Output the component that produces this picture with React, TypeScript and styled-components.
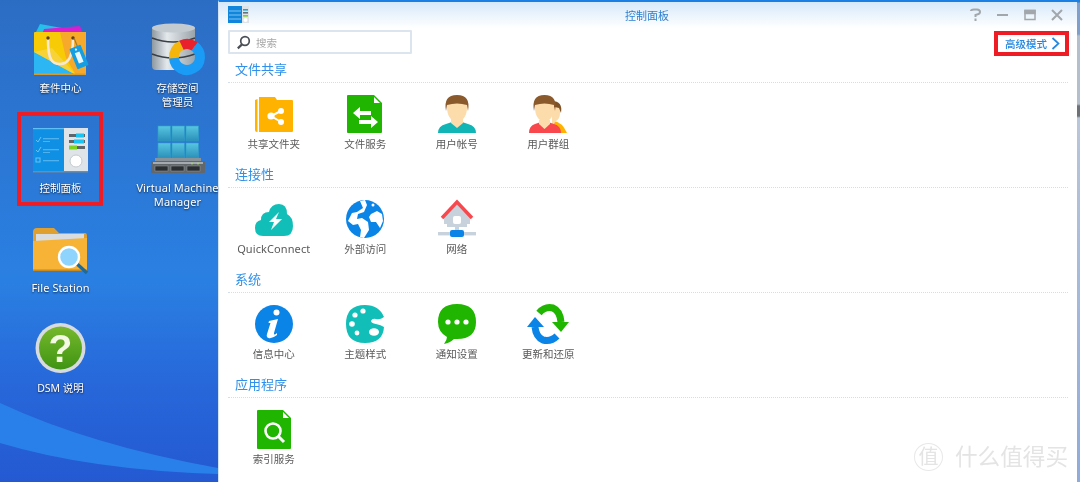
import React from 'react';
import styled, { createGlobalStyle } from 'styled-components';

const Global = createGlobalStyle`
  html, body { margin: 0; padding: 0; background: #fff; }
  body { font-family: "Noto Sans", "Noto Sans CJK SC", sans-serif; }
`;

const Page = styled.div`
  position: relative;
  display: flex;
  width: 1080px;
  height: 482px;
  overflow: hidden;
  background: linear-gradient(180deg, #2c6dc4 0%, #2b78d6 35%, #2a80e2 58%, #2767da 80%, #2459d2 100%);
  filter: blur(0.35px);
`;

const Wave = styled.svg`
  position: absolute;
  left: 0;
  top: 0;
`;

const Desktop = styled.div`
  position: relative;
  display: grid;
  grid-template-columns: 117px 99px;
  grid-auto-rows: 100px;
  width: 218px;
  flex: none;
  padding: 20px 0 0 2px;
  box-sizing: border-box;
`;

const Shortcut = styled.div<{ $marked?: boolean }>`
  position: relative;
  display: flex;
  flex-direction: column;
  align-items: center;
  width: 117px;
  &::after {
    content: '';
    display: ${(p) => (p.$marked ? 'block' : 'none')};
    position: absolute;
    left: 15px;
    top: -8px;
    width: 86px;
    height: 94px;
    box-sizing: border-box;
    border: 4px solid #ee1c25;
  }
`;

const ShortcutLabel = styled.div<{ $latin?: boolean }>`
  margin-top: 1px;
  font-size: ${(p) => (p.$latin ? '11px' : '10.5px')};
  letter-spacing: ${(p) => (p.$latin ? '0.1px' : '0')};
  line-height: 14px;
  color: #fff;
  text-align: center;
  white-space: pre;
  text-shadow: 0 1px 2px rgba(0, 0, 0, 0.7);
`;

const Window = styled.div`
  display: flex;
  flex-direction: column;
  flex: none;
  width: 859px;
  height: 482px;
  box-sizing: border-box;
  background: #fff;
  border-top: 2px solid #1a80e4;
  border-left: 1px solid #d4e2f6;
`;

const TitleBar = styled.div`
  display: flex;
  align-items: center;
  height: 26px;
  flex: none;
  padding: 0 12px 0 9px;
  background: linear-gradient(180deg, #d6e9fa 0%, #ffffff 100%);
`;

const Title = styled.div`
  flex: 1;
  text-align: center;
  font-size: 11px;
  color: #2c7fd0;
  padding-left: 76px;
`;

const Controls = styled.div`
  display: flex;
  gap: 11px;
  align-items: center;
`;

const Toolbar = styled.div`
  display: flex;
  align-items: flex-start;
  justify-content: space-between;
  height: 30px;
  flex: none;
  padding: 2px 8px 0 9px;
`;

const Search = styled.div`
  display: flex;
  align-items: center;
  gap: 5px;
  width: 184px;
  height: 24px;
  box-sizing: border-box;
  padding-left: 6px;
  border: 2px solid #dce4ee;
  border-radius: 1px;
  font-size: 10.5px;
  color: #a8a8a8;
`;

const AdvancedLink = styled.div`
  display: flex;
  align-items: center;
  justify-content: space-between;
  width: 75px;
  height: 25px;
  margin-top: 1px;
  box-sizing: border-box;
  padding: 0 5px 0 7px;
  border: 4px solid #ee1c25;
  font-size: 10.5px;
  color: #2487e0;
  font-weight: 500;
`;

const Section = styled.section`
  height: 105px;
  flex: none;
  padding: 0 9px;
`;

const SectionHead = styled.div`
  height: 20px;
  padding: 0 0 2px 7px;
  font-size: 13px;
  line-height: 19px;
  color: #2e90ea;
  border-bottom: 1px dotted #d3deec;
`;

const Items = styled.div`
  display: grid;
  grid-template-columns: repeat(4, 91.5px);
  padding-top: 9px;
`;

const Item = styled.div`
  display: flex;
  flex-direction: column;
  align-items: center;
`;

const ItemLabel = styled.div<{ $latin?: boolean }>`
  margin-top: 1px;
  font-size: ${(p) => (p.$latin ? '11px' : '10.5px')};
  letter-spacing: ${(p) => (p.$latin ? '0.1px' : '0')};
  line-height: 14px;
  color: #5a5a5a;
`;

const Strip = styled.div`
  flex: 1;
  background: linear-gradient(180deg, #1a80e4 0, #1a80e4 2px, #7f9fce 3px, #7f9fce 34px, #b4bfcd 36px, #b4bfcd 104px, #6d7278 106px, #6d7278 116px, #b9c6da 118px, #8fabdc 100%);
`;

const Watermark = styled.div`
  position: absolute;
  right: 12px;
  bottom: 11px;
  display: flex;
  align-items: center;
  gap: 12px;
  font-size: 22.6px;
  line-height: 28px;
  color: #e4e4e4;
`;

const WatermarkBadge = styled.span`
  display: flex;
  align-items: center;
  justify-content: center;
  width: 29px;
  height: 28px;
  box-sizing: border-box;
  border: 1px solid #e8e8e8;
  border-radius: 50%;
  font-size: 20px;
`;

const Package = () => (
  <svg width="60" height="60" viewBox="31 20 60 60">
    <polygon points="36,32 40,24 62,28 46,32" fill="#24c0ea" />
    <polygon points="43,32 44,29 80,26 82,32" fill="#d61fd0" />
    <rect x="34" y="32" width="52" height="43" rx="1" fill="#f7cb06" />
    <polygon points="60,32 86,32 86,75 76,75 66,58" fill="#f6a92a" />
    <polygon points="34,52 76,75 34,75" fill="#2cb6f4" />
    <polygon points="34,52 52,48 76,75" fill="#f9d95a" opacity="0.6" />
    <rect x="34" y="73.5" width="52" height="1.5" fill="#d99b2a" />
    <path d="M48 39 C48 60 52 64 60 64 C68 64 73 58 73 39" fill="none" stroke="#f6e9cf" strokeWidth="2.6" />
    <circle cx="48" cy="38" r="1.7" fill="#5b3b12" />
    <circle cx="73" cy="38" r="1.7" fill="#5b3b12" />
    <path d="M74 38 L78 48" stroke="#a67a2b" strokeWidth="1.2" />
    <g transform="rotate(-22 79 57)">
      <rect x="73" y="46" width="12" height="22" rx="1" fill="#159fe2" />
      <rect x="76.5" y="52" width="5" height="11" fill="#e8f6ff" />
      <circle cx="79" cy="49" r="1.1" fill="#e8f6ff" />
    </g>
  </svg>
);

const Storage = () => (
  <svg width="60" height="60" viewBox="148 20 60 60">
    <defs>
      <linearGradient id="disk" x1="0" x2="1" y1="0" y2="0">
        <stop offset="0" stopColor="#8d98a0" />
        <stop offset="0.35" stopColor="#e4e9ec" />
        <stop offset="1" stopColor="#9aa3aa" />
      </linearGradient>
    </defs>
    <rect x="152" y="26" width="43" height="44" rx="4" fill="url(#disk)" />
    <ellipse cx="173.5" cy="28" rx="21.5" ry="4.5" fill="#c3cbd1" />
    <path d="M152 38 Q173 46 195 38" fill="none" stroke="#3a4046" strokeWidth="1.6" />
    <path d="M152 54 Q173 62 195 54" fill="none" stroke="#3a4046" strokeWidth="1.6" />
    <path d="M194.5 46.4 A13 13 0 1 1 174 58.1" fill="none" stroke="#1a9cf6" strokeWidth="10" />
    <path d="M174 58.1 A13 13 0 0 1 181.5 45.2" fill="none" stroke="#f5b50a" strokeWidth="10" />
    <path d="M181.5 45.2 A13 13 0 0 1 194.5 46.4" fill="none" stroke="#e8212c" strokeWidth="10" />
  </svg>
);

const ControlPanel = () => (
  <svg width="60" height="60" viewBox="31 120 60 60">
    <rect x="33" y="128" width="31" height="44" fill="#0f90e4" />
    <rect x="33" y="128" width="31" height="1.2" fill="#5ec0f5" />
    <rect x="64" y="128" width="24" height="44" fill="#dfe4e8" />
    <rect x="33" y="171" width="55" height="1.5" fill="#7a8a96" />
    <g fill="none" stroke="#67c3f5" strokeWidth="1">
      <path d="M36 140 L38 142 L41 137" />
      <path d="M36 150 L38 152 L41 147" />
      <rect x="36" y="158" width="4" height="4" />
    </g>
    <g fill="#4fb2ee">
      <rect x="43" y="138" width="16" height="1.3" />
      <rect x="43" y="141" width="7" height="1" />
      <rect x="43" y="149" width="16" height="1.3" />
      <rect x="43" y="152" width="7" height="1" />
      <rect x="43" y="160" width="16" height="1.3" />
    </g>
    <rect x="69" y="134" width="16" height="3" fill="#5e666c" />
    <rect x="76" y="133.5" width="8" height="4" fill="#19c3f2" />
    <rect x="69" y="140" width="16" height="3" fill="#5e666c" />
    <rect x="74" y="139.5" width="10" height="4" fill="#19c3f2" />
    <rect x="69" y="146" width="16" height="3" fill="#5e666c" />
    <rect x="69" y="145.5" width="8" height="4" fill="#7ed321" />
    <circle cx="76" cy="161" r="6" fill="#fff" stroke="#c4cbd0" />
  </svg>
);

const VirtualMachine = () => (
  <svg width="60" height="60" viewBox="148 120 60 60">
    <defs>
      <linearGradient id="cube" x1="0" x2="0" y1="0" y2="1">
        <stop offset="0" stopColor="#58c6e2" />
        <stop offset="1" stopColor="#2a8fb8" />
      </linearGradient>
    </defs>
    {[158, 172, 186].map((x) =>
      [126, 143].map((y) => <rect key={`${x}-${y}`} x={x} y={y} width="12.5" height="15" fill="url(#cube)" stroke="#2f9fc6" strokeWidth="0.6" />),
    )}
    <rect x="155" y="158" width="46" height="4" fill="#8a9299" />
    <rect x="151" y="161" width="54" height="12" rx="1" fill="#62676b" />
    <rect x="153" y="162" width="50" height="2" fill="#a4aaaf" />
    {[155, 171, 187].map((x) => (
      <rect key={x} x={x} y="166" width="13" height="5" fill="#2c2f32" stroke="#9a9fa4" strokeWidth="0.5" />
    ))}
    <circle cx="192" cy="163.5" r="1" fill="#9be04a" />
    <circle cx="198" cy="163.5" r="1" fill="#9be04a" />
  </svg>
);

const FileStation = () => (
  <svg width="60" height="60" viewBox="31 220 60 60">
    <path d="M33 232 Q33 228 37 228 L54 228 L59 233 L85 233 Q87 233 87 236 L87 250 L33 250 Z" fill="#e0a030" />
    <rect x="36" y="234" width="48" height="10" fill="#d9dde0" />
    <path d="M33 241 L87 238 L87 271 L33 271 Z" fill="#f6b335" />
    <rect x="33" y="269.5" width="54" height="1.5" fill="#c98a1f" />
    <path d="M76 263 L87 273" stroke="#1e6a9a" strokeWidth="3.4" />
    <circle cx="69" cy="257" r="10" fill="#8fd4fc" stroke="#fff" strokeWidth="2.4" />
  </svg>
);

const Help = () => (
  <svg width="60" height="60" viewBox="31 320 60 60">
    <defs>
      <linearGradient id="help" x1="0" x2="0" y1="0" y2="1">
        <stop offset="0" stopColor="#76b82c" />
        <stop offset="1" stopColor="#3f9413" />
      </linearGradient>
    </defs>
    <circle cx="60.5" cy="348" r="25" fill="#d7dbe0" />
    <circle cx="60.5" cy="348" r="21.5" fill="url(#help)" />
    <text x="60.5" y="362" textAnchor="middle" fontFamily="Liberation Sans" fontWeight="700" fontSize="39" fill="#f3f9e2">?</text>
  </svg>
);

const ItemIcon = ({ children }: { children: React.ReactNode }) => (
  <svg width="44" height="44" viewBox="0 0 44 44">{children}</svg>
);

const SharedFolder = () => (
  <ItemIcon>
    <path d="M3 8 L5.5 7 L5.5 40 L5 40 Q3 40 3 38 Z" fill="#ffb300" />
    <path d="M7 5 L23 5 L25 8 L40 8 Q41 8 41 9 L41 39 Q41 40 40 40 L7 40 Z" fill="#ffb300" />
    <path d="M19 24 L29 19 M19 24 L29 30" stroke="#fff" strokeWidth="2" />
    <circle cx="19" cy="24" r="3.6" fill="#fff" />
    <circle cx="29" cy="19" r="3" fill="#fff" />
    <circle cx="29" cy="30" r="3" fill="#fff" />
  </ItemIcon>
);

const FileService = () => (
  <ItemIcon>
    <path d="M5 3 L31 3 L39 11 L39 40 Q39 41 38 41 L5 41 Q4 41 4 40 L4 4 Q4 3 5 3 Z" fill="#20b500" />
    <polygon points="31,5 37,11 31,11" fill="#fff" />
    <path d="M10 21 L17 15 L17 19 L28 19 L28 23 L17 23 L17 27 Z" fill="#fff" />
    <path d="M35 30 L28 24 L28 28 L16 28 L16 32 L28 32 L28 36 Z" fill="#fff" />
  </ItemIcon>
);

const User = () => (
  <ItemIcon>
    <path d="M3 41 Q3 34 11 32 L17 30 L27 30 L33 32 Q41 34 41 41 Z" fill="#11b5b5" />
    <path d="M16 27 L28 27 L28 31 L22 36 L16 31 Z" fill="#fddcab" />
    <path d="M12 9 L12 15 Q12 28 22 30 Q32 28 32 15 L32 9 Z" fill="#fddcab" />
    <path d="M11 19 Q8 3 22 3 Q36 3 33 19 L32 13 Q22 10 12 13 Z" fill="#8a5a2c" />
  </ItemIcon>
);

const Group = () => (
  <ItemIcon>
    <path d="M28 41 L28 29 Q36 30 41 41 Z" fill="#ffb300" />
    <path d="M26 12 Q36 12 34 21 Q34 27 30 29 L26 34 Z" fill="#fddcab" />
    <path d="M26 9 Q37 9 35 21 L33 16 Q30 15 26 15 Z" fill="#7d5227" />
    <path d="M3 41 Q3 34 9 32 L15 30 L22 30 L28 32 Q35 34 35 41 Z" fill="#f9474e" />
    <path d="M13 28 L24 28 L24 32 L18.5 37 L13 32 Z" fill="#fddcab" />
    <path d="M9 9 L9 15 Q9 28 18.5 30 Q28 28 28 15 L28 9 Z" fill="#fddcab" />
    <path d="M8 19 Q5 3 18.5 3 Q32 3 29 19 L28 13 Q18.5 10 9 13 Z" fill="#8a5a2c" />
  </ItemIcon>
);

const QuickConnect = () => (
  <ItemIcon>
    <path d="M11 39 Q3 39 3 31 Q3 24 9 23 Q9 15 17 15 Q19 7 27 7 Q35 7 35 17 Q41 20 41 29 Q41 39 32 39 Z" fill="#12bfb8" />
    <path d="M27 15 L17 25 L22 25 L19 33 L30 22 L24 22 Z" fill="#fff" />
  </ItemIcon>
);

const Globe = () => (
  <ItemIcon>
    <circle cx="22" cy="22" r="19" fill="#0a84e6" />
    <path d="M17 4 L20 11 L14 15 L9 16 L5 24 L10 28 L15 27 L18 33 L17 40 L21 41 L26 33 L25 25 L19 21 L14 22 L15 17 L21 15 L24 8 L22 3 Z" fill="#fff" />
    <path d="M28 17 L34 14 L39 17 L40 24 L37 31 L33 25 L28 25 L26 20 Z" fill="#fff" />
    <circle cx="30" cy="8" r="1.5" fill="#fff" />
  </ItemIcon>
);

const Network = () => (
  <ItemIcon>
    <polygon points="9,19 22,7 35,19 35,27 9,27" fill="#c8d2dc" />
    <path d="M7 21 L22 5 L37 21" fill="none" stroke="#f9474e" strokeWidth="3.4" />
    <rect x="18" y="19" width="8" height="8" rx="2" fill="#fff" />
    <rect x="12" y="27" width="20" height="3" fill="#c8d2dc" />
    <rect x="20" y="29" width="4" height="5" fill="#c8d2dc" />
    <rect x="3" y="35" width="38" height="3.4" fill="#c8d2dc" />
    <rect x="15" y="33" width="14" height="7" rx="2" fill="#0a84e6" />
  </ItemIcon>
);

const Info = () => (
  <ItemIcon>
    <circle cx="22" cy="22" r="19" fill="#0a84e6" />
    <circle cx="24.5" cy="10.5" r="3" fill="#fff" />
    <path d="M17 19 L26 17 L22 31 Q21.5 34 25 31 L25 33 Q20 37 16.5 36 Q14 35 15 32 L18.5 21 L16.5 21 Z" fill="#fff" />
  </ItemIcon>
);

const Palette = () => (
  <ItemIcon>
    <path d="M22 3 Q36 3 41 15 Q37 18 33 17 Q29 16 28 19 Q28 21 33 22 Q38 23 41 25 Q40 41 22 41 Q3 41 3 22 Q3 3 22 3 Z" fill="#12bfb8" />
    <circle cx="20" cy="9" r="2.6" fill="#fff" />
    <circle cx="12" cy="13" r="2.6" fill="#fff" />
    <circle cx="9" cy="22" r="2.8" fill="#fff" />
    <circle cx="14" cy="31" r="2.4" fill="#fff" />
    <ellipse cx="31" cy="30" rx="5" ry="3.8" fill="#fff" />
  </ItemIcon>
);

const Chat = () => (
  <ItemIcon>
    <path d="M22 2 Q41 2 41 20 Q41 37 22 37 L19 37 Q15 41 9 42 Q12 38 12 35 Q3 30 3 20 Q3 2 22 2 Z" fill="#20b500" />
    <circle cx="13" cy="20" r="2.6" fill="#fff" />
    <circle cx="22" cy="20" r="2.6" fill="#fff" />
    <circle cx="31" cy="20" r="2.6" fill="#fff" />
  </ItemIcon>
);

const Refresh = () => (
  <ItemIcon>
    <path d="M13 11 Q19 4 27 6 Q34 9 35 20" fill="none" stroke="#20b500" strokeWidth="7" />
    <polygon points="26,20 43,20 35,30" fill="#20b500" />
    <path d="M31 34 Q25 40 17 38 Q10 35 9 25" fill="none" stroke="#0a84e6" strokeWidth="7" />
    <polygon points="1,25 18,25 9,15" fill="#0a84e6" />
  </ItemIcon>
);

const IndexService = () => (
  <ItemIcon>
    <path d="M6 3 L31 3 L39 11 L39 41 Q39 42 38 42 L6 42 Q5 42 5 41 L5 4 Q5 3 6 3 Z" fill="#20b500" />
    <polygon points="31,5 37,11 31,11" fill="#fff" />
    <circle cx="21" cy="24" r="7.5" fill="none" stroke="#fff" strokeWidth="2.6" />
    <path d="M26.5 29.5 L32 35" stroke="#fff" strokeWidth="3" />
  </ItemIcon>
);

const desktop = [
  { label: '套件中心', icon: <Package /> },
  { label: '存储空间\n管理员', icon: <Storage /> },
  { label: '控制面板', icon: <ControlPanel />, marked: true },
  { label: 'Virtual Machine\nManager', icon: <VirtualMachine />, latin: true },
  { label: 'File Station', icon: <FileStation />, latin: true },
  null,
  { label: 'DSM 说明', icon: <Help /> },
];

const sections = [
  {
    title: '文件共享',
    items: [
      { label: '共享文件夹', icon: <SharedFolder /> },
      { label: '文件服务', icon: <FileService /> },
      { label: '用户帐号', icon: <User /> },
      { label: '用户群组', icon: <Group /> },
    ],
  },
  {
    title: '连接性',
    items: [
      { label: 'QuickConnect', icon: <QuickConnect />, latin: true },
      { label: '外部访问', icon: <Globe /> },
      { label: '网络', icon: <Network /> },
    ],
  },
  {
    title: '系统',
    items: [
      { label: '信息中心', icon: <Info /> },
      { label: '主题样式', icon: <Palette /> },
      { label: '通知设置', icon: <Chat /> },
      { label: '更新和还原', icon: <Refresh /> },
    ],
  },
  {
    title: '应用程序',
    items: [{ label: '索引服务', icon: <IndexService /> }],
  },
];

export default function App() {
  return (
    <>
      <Global />
      <Page>
        <Wave width="218" height="482" viewBox="0 0 218 482">
          <path d="M0 403 Q90 445 218 468 L218 474 Q90 470 0 443 Z" fill="#2a80ea" />
        </Wave>
        <Desktop>
          {desktop.map((entry, i) =>
            entry ? (
              <Shortcut key={i} $marked={entry.marked}>
                {entry.icon}
                <ShortcutLabel $latin={entry.latin}>{entry.label}</ShortcutLabel>
              </Shortcut>
            ) : (
              <div key={i} />
            ),
          )}
        </Desktop>
        <Window>
          <TitleBar>
            <svg width="22" height="18" viewBox="0 0 22 18">
              <rect width="14" height="17" fill="#0f85dc" />
              <path d="M1 5 H13 M1 9 H13 M1 13 H13" stroke="#9ad4f7" strokeWidth="0.8" />
              <rect x="14" width="7" height="17" fill="#dde3e6" />
              <rect x="15" y="3" width="5" height="1.6" fill="#1aa6d8" />
              <rect x="15" y="6" width="5" height="1.6" fill="#66707a" />
              <rect x="15" y="9" width="5" height="1.6" fill="#7ed321" />
              <circle cx="17.5" cy="14" r="2" fill="#fff" />
            </svg>
            <Title>控制面板</Title>
            <Controls>
              <svg width="16" height="14" viewBox="0 0 16 14" fill="none" stroke="#a2a7ab" strokeWidth="2">
                <path d="M3 3 Q3 1.5 6 1.5 H9 Q12 1.5 12 4 Q12 6 9 6.5 L7.5 7 V9" />
                <path d="M7.5 10.5 V13" />
              </svg>
              <svg width="16" height="14" viewBox="0 0 16 14" fill="none" stroke="#a2a7ab" strokeWidth="2">
                <path d="M2 7 H13" />
              </svg>
              <svg width="16" height="14" viewBox="0 0 16 14" fill="none" stroke="#a2a7ab" strokeWidth="1.5">
                <rect x="3" y="2.5" width="10" height="9" />
                <rect x="3" y="2.5" width="10" height="3" fill="#a2a7ab" />
              </svg>
              <svg width="16" height="14" viewBox="0 0 16 14" fill="none" stroke="#a2a7ab" strokeWidth="2">
                <path d="M3 2 L13 12 M13 2 L3 12" />
              </svg>
            </Controls>
          </TitleBar>
          <Toolbar>
            <Search>
              <svg width="15" height="15" viewBox="0 0 15 15" fill="none" stroke="#4a4f55" strokeWidth="1.7">
                <circle cx="9" cy="6" r="4.3" />
                <path d="M6 9.4 L1.8 13.4" strokeWidth="2.2" />
              </svg>
              搜索
            </Search>
            <AdvancedLink>
              高级模式
              <svg width="9" height="13" viewBox="0 0 9 13" fill="none" stroke="#2487e0" strokeWidth="1.7">
                <path d="M1.5 1 L7.5 6.5 L1.5 12" />
              </svg>
            </AdvancedLink>
          </Toolbar>
          {sections.map((section) => (
            <Section key={section.title}>
              <SectionHead>{section.title}</SectionHead>
              <Items>
                {section.items.map((item) => (
                  <Item key={item.label}>
                    {item.icon}
                    <ItemLabel $latin={item.latin}>{item.label}</ItemLabel>
                  </Item>
                ))}
              </Items>
            </Section>
          ))}
        </Window>
        <Strip />
        <Watermark>
          <WatermarkBadge>值</WatermarkBadge>
          <span>什么值得买</span>
        </Watermark>
      </Page>
    </>
  );
}
